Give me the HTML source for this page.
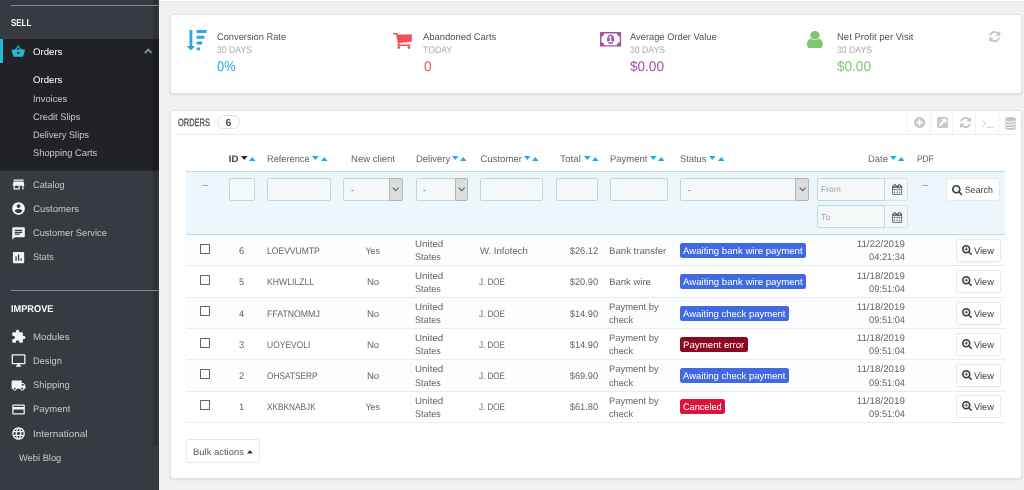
<!DOCTYPE html>
<html lang="en">
<head>
<meta charset="utf-8">
<title>Orders</title>
<style>
*{box-sizing:border-box;margin:0;padding:0}
html,body{width:1024px;height:490px;overflow:hidden;background:#eef0f1;font-family:"Liberation Sans",sans-serif;font-size:9.2px;color:#666}
#page{will-change:transform;position:relative;width:1024px;height:490px;overflow:hidden}
#nav{position:absolute;left:0;top:0;width:158.800px;height:490px;background:#383a42}
.panel{background:#fff;border:1px solid #dfe1e3;border-radius:3px;box-shadow:0 1px 2.500px rgba(0,0,0,.07)}
.t{position:absolute;white-space:nowrap;display:block;text-rendering:geometricPrecision}
svg{display:block;overflow:visible}
</style>
</head>
<body>
<div id="page">
<nav id="nav">
<div style="position:absolute;left:0.00px;top:38.80px;width:159.00px;height:131.20px;background:#202226"></div>
<div style="position:absolute;left:0.00px;top:170.00px;width:159.00px;height:1.00px;background:rgba(32,34,38,.55)"></div>
<div style="position:absolute;left:0.00px;top:38.80px;width:3.10px;height:24.30px;background:#25b9d7"></div>
<div style="position:absolute;left:153.00px;top:0.00px;width:5.30px;height:446.00px;background:rgba(0,0,0,.16);border-radius:0 0 3px 3px"></div>
<div style="position:absolute;left:11.30px;top:5.00px;width:147.70px;height:1.00px;background:#85888d"></div>
<div style="position:absolute;left:11.30px;top:289.90px;width:147.70px;height:1.00px;background:#85888d"></div>
<span class="t" style="top:18.00px;font-size:9.9px;line-height:12px;color:#fff;font-weight:700;left:11.30px;transform-origin:0 50%;transform:scaleX(0.8063);">SELL</span>
<span class="t" style="top:304.00px;font-size:9.9px;line-height:12px;color:#fff;font-weight:700;left:11.30px;transform-origin:0 50%;transform:scaleX(0.9308);">IMPROVE</span>
<svg style="position:absolute;left:10.60px;top:44.20px;" width="14.50" height="14.50" viewBox="0 0 24 24" fill="#25b9d7"><path d="M17.21 9l-4.38-6.56c-.19-.28-.51-.42-.83-.42-.32 0-.64.14-.83.43L6.79 9H2c-.55 0-1 .45-1 1 0 .09.01.18.04.27l2.54 9.27c.23.84 1 1.46 1.92 1.46h13c.92 0 1.69-.62 1.93-1.46l2.54-9.27L23 10c0-.55-.45-1-1-1h-4.79zM9 9l3-4.4L15 9H9zm3 8c-1.1 0-2-.9-2-2s.9-2 2-2 2 .9 2 2-.9 2-2 2z"/></svg>
<span class="t" style="top:47.00px;font-size:9.5px;line-height:12px;color:#fff;left:33.00px;transform-origin:0 50%;transform:scaleX(1.0129);">Orders</span>
<svg style="position:absolute;left:140.70px;top:44.00px;" width="14.40" height="14.40" viewBox="0 0 24 24" fill="#8b9aa0"><path d="M7.41 15.41L12 10.83l4.59 4.58L18 14l-6-6-6 6z" stroke="#8b9aa0" stroke-width="1.3"/></svg>
<span class="t" style="top:75.00px;font-size:9.5px;line-height:12px;color:#fff;left:33.20px;transform-origin:0 50%;transform:scaleX(1.0129);">Orders</span>
<span class="t" style="top:94.00px;font-size:9.5px;line-height:12px;color:#c7c8ca;left:33.20px;transform-origin:0 50%;transform:scaleX(0.9787);">Invoices</span>
<span class="t" style="top:112.00px;font-size:9.5px;line-height:12px;color:#c7c8ca;left:33.20px;transform-origin:0 50%;transform:scaleX(0.9742);">Credit Slips</span>
<span class="t" style="top:130.00px;font-size:9.5px;line-height:12px;color:#c7c8ca;left:33.20px;transform-origin:0 50%;transform:scaleX(0.9721);">Delivery Slips</span>
<span class="t" style="top:148.00px;font-size:9.5px;line-height:12px;color:#c7c8ca;left:33.20px;transform-origin:0 50%;transform:scaleX(0.9811);">Shopping Carts</span>
<svg style="position:absolute;left:10.60px;top:177.20px;" width="15.10" height="15.10" viewBox="0 0 24 24" fill="#f4f4f5"><path d="M20 4H4v2h16V4zm1 10v-2l-1-5H4l-1 5v2h1v6h10v-6h4v6h2v-6h1zm-9 4H6v-4h6v4z"/></svg>
<span class="t" style="top:180.00px;font-size:9.5px;line-height:12px;color:#c7c8ca;left:33.20px;transform-origin:0 50%;transform:scaleX(0.9687);">Catalog</span>
<svg style="position:absolute;left:10.60px;top:201.36px;" width="15.10" height="15.10" viewBox="0 0 24 24" fill="#f4f4f5"><path d="M12 2C6.48 2 2 6.48 2 12s4.48 10 10 10 10-4.48 10-10S17.52 2 12 2zm0 3c1.66 0 3 1.34 3 3s-1.34 3-3 3-3-1.34-3-3 1.34-3 3-3zm0 14.2c-2.5 0-4.71-1.28-6-3.22.03-1.99 4-3.08 6-3.08 1.99 0 5.97 1.09 6 3.08-1.29 1.94-3.5 3.22-6 3.22z"/></svg>
<span class="t" style="top:204.00px;font-size:9.5px;line-height:12px;color:#c7c8ca;left:33.20px;transform-origin:0 50%;">Customers</span>
<svg style="position:absolute;left:10.60px;top:225.52px;" width="15.10" height="15.10" viewBox="0 0 24 24" fill="#f4f4f5"><path d="M20 2H4c-1.1 0-1.99.9-1.99 2L2 22l4-4h14c1.1 0 2-.9 2-2V4c0-1.1-.9-2-2-2zM6 9h12v2H6V9zm8 5H6v-2h8v2zm4-6H6V6h12v2z"/></svg>
<span class="t" style="top:228.00px;font-size:9.5px;line-height:12px;color:#c7c8ca;left:33.20px;transform-origin:0 50%;transform:scaleX(0.9777);">Customer Service</span>
<svg style="position:absolute;left:10.60px;top:249.68px;" width="15.10" height="15.10" viewBox="0 0 24 24" fill="#f4f4f5"><path d="M19 3H5c-1.1 0-2 .9-2 2v14c0 1.1.9 2 2 2h14c1.1 0 2-.9 2-2V5c0-1.1-.9-2-2-2zM9 17H7v-7h2v7zm4 0h-2V7h2v10zm4 0h-2v-4h2v4z"/></svg>
<span class="t" style="top:252.00px;font-size:9.5px;line-height:12px;color:#c7c8ca;left:33.20px;transform-origin:0 50%;transform:scaleX(0.9576);">Stats</span>
<svg style="position:absolute;left:10.60px;top:329.30px;" width="15.10" height="15.10" viewBox="0 0 24 24" fill="#f4f4f5"><path d="M20.5 11H19V7c0-1.1-.9-2-2-2h-4V3.5C13 2.12 11.88 1 10.5 1S8 2.12 8 3.5V5H4c-1.1 0-1.99.9-1.99 2v3.8H3.5c1.49 0 2.7 1.21 2.7 2.7s-1.21 2.7-2.7 2.7H2V20c0 1.1.9 2 2 2h3.8v-1.5c0-1.49 1.21-2.7 2.7-2.7 1.49 0 2.7 1.21 2.7 2.7V22H17c1.1 0 2-.9 2-2v-4h1.5c1.38 0 2.5-1.12 2.5-2.5S21.88 11 20.5 11z"/></svg>
<span class="t" style="top:332.00px;font-size:9.5px;line-height:12px;color:#c7c8ca;left:33.20px;transform-origin:0 50%;transform:scaleX(1.0154);">Modules</span>
<svg style="position:absolute;left:10.60px;top:353.46px;" width="15.10" height="15.10" viewBox="0 0 24 24" fill="#f4f4f5"><path d="M21 2H3c-1.1 0-2 .9-2 2v12c0 1.1.9 2 2 2h7v2H8v2h8v-2h-2v-2h7c1.1 0 2-.9 2-2V4c0-1.1-.9-2-2-2zm0 14H3V4h18v12z"/></svg>
<span class="t" style="top:356.00px;font-size:9.5px;line-height:12px;color:#c7c8ca;left:33.20px;transform-origin:0 50%;transform:scaleX(0.9747);">Design</span>
<svg style="position:absolute;left:10.60px;top:377.62px;" width="15.10" height="15.10" viewBox="0 0 24 24" fill="#f4f4f5"><path d="M20 8h-3V4H3c-1.1 0-2 .9-2 2v11h2c0 1.66 1.34 3 3 3s3-1.34 3-3h6c0 1.66 1.34 3 3 3s3-1.34 3-3h2v-5l-3-4zM6 18.5c-.83 0-1.5-.67-1.5-1.5s.67-1.5 1.5-1.5 1.5.67 1.5 1.5-.67 1.5-1.5 1.5zm13.5-9l1.96 2.5H17V9.5h2.5zm-1.5 9c-.83 0-1.5-.67-1.5-1.5s.67-1.5 1.5-1.5 1.5.67 1.5 1.5-.67 1.5-1.5 1.5z"/></svg>
<span class="t" style="top:380.00px;font-size:9.5px;line-height:12px;color:#c7c8ca;left:33.20px;transform-origin:0 50%;transform:scaleX(0.9937);">Shipping</span>
<svg style="position:absolute;left:10.60px;top:401.78px;" width="15.10" height="15.10" viewBox="0 0 24 24" fill="#f4f4f5"><path d="M20 4H4c-1.11 0-1.99.89-1.99 2L2 18c0 1.11.89 2 2 2h16c1.11 0 2-.89 2-2V6c0-1.11-.89-2-2-2zm0 14H4v-6h16v6zm0-10H4V6h16v2z"/></svg>
<span class="t" style="top:404.00px;font-size:9.5px;line-height:12px;color:#c7c8ca;left:33.20px;transform-origin:0 50%;transform:scaleX(0.9957);">Payment</span>
<svg style="position:absolute;left:10.60px;top:425.94px;" width="15.10" height="15.10" viewBox="0 0 24 24" fill="#f4f4f5"><path d="M11.99 2C6.47 2 2 6.48 2 12s4.47 10 9.99 10C17.52 22 22 17.52 22 12S17.52 2 11.99 2zm6.93 6h-2.95c-.32-1.25-.78-2.45-1.38-3.56 1.84.63 3.37 1.91 4.33 3.56zM12 4.04c.83 1.2 1.48 2.53 1.91 3.96h-3.82c.43-1.43 1.08-2.76 1.91-3.96zM4.26 14C4.1 13.36 4 12.69 4 12s.1-1.36.26-2h3.38c-.08.66-.14 1.32-.14 2 0 .68.06 1.34.14 2H4.26zm.82 2h2.95c.32 1.25.78 2.45 1.38 3.56-1.84-.63-3.37-1.9-4.33-3.56zm2.95-8H5.08c.96-1.66 2.49-2.93 4.33-3.56C8.81 5.55 8.35 6.75 8.03 8zM12 19.96c-.83-1.2-1.48-2.53-1.91-3.96h3.82c-.43 1.43-1.08 2.76-1.91 3.96zM14.34 14H9.66c-.09-.66-.16-1.32-.16-2 0-.68.07-1.35.16-2h4.68c.09.65.16 1.32.16 2 0 .68-.07 1.34-.16 2zm.25 5.56c.6-1.11 1.06-2.31 1.38-3.56h2.95c-.96 1.65-2.49 2.93-4.33 3.56zM16.36 14c.08-.66.14-1.32.14-2 0-.68-.06-1.34-.14-2h3.38c.16.64.26 1.31.26 2s-.1 1.36-.26 2h-3.38z"/></svg>
<span class="t" style="top:429.00px;font-size:9.5px;line-height:12px;color:#c7c8ca;left:33.20px;transform-origin:0 50%;transform:scaleX(1.0427);">International</span>
<span class="t" style="top:453.00px;font-size:9.5px;line-height:12px;color:#c7c8ca;left:19.10px;transform-origin:0 50%;transform:scaleX(0.9800);">Webi Blog</span>
</nav>
<main>
<div style="position:absolute;left:159.00px;top:0.00px;width:865.00px;height:1.00px;background:#fdfdfd"></div>
<div style="position:absolute;left:159.00px;top:1.00px;width:865.00px;height:1.00px;background:#e9ebec"></div>
<div class="panel" style="position:absolute;left:170.00px;top:14.00px;width:852.00px;height:80.00px;"></div>
<svg style="position:absolute;left:186.50px;top:29.80px" width="19.50" height="20.30" viewBox="31.2 0 1760.8 1792" preserveAspectRatio="none" fill="#2ba8e3"><path d="M1216 1568v192q0 14-9 23t-23 9h-256q-14 0-23-9t-9-23v-192q0-14 9-23t23-9h256q14 0 23 9t9 23zm-480-128q0 12-10 24l-319 319q-10 9-23 9-12 0-23-9l-320-320q-15-16-7-35 8-20 30-20h192v-1376q0-14 9-23t23-9h192q14 0 23 9t9 23v1376h192q14 0 23 9t9 23zm672-384v192q0 14-9 23t-23 9h-448q-14 0-23-9t-9-23v-192q0-14 9-23t23-9h448q14 0 23 9t9 23zm192-512v192q0 14-9 23t-23 9h-640q-14 0-23-9t-9-23v-192q0-14 9-23t23-9h640q14 0 23 9t9 23zm192-512v192q0 14-9 23t-23 9h-832q-14 0-23-9t-9-23v-192q0-14 9-23t23-9h832q14 0 23 9t9 23z"/></svg>
<svg style="position:absolute;left:392.50px;top:32.90px" width="18.85" height="15.95" viewBox="64 256 1664 1408" preserveAspectRatio="xMidYMid meet" fill="#f64e55"><path d="M704 1536q0 52-38 90t-90 38-90-38-38-90 38-90 90-38 90 38 38 90zm896 0q0 52-38 90t-90 38-90-38-38-90 38-90 90-38 90 38 38 90zm128-1088v512q0 24-16.500 42.500t-40.500 21.500l-1044 122q13 60 13 70 0 16-24 64h920q26 0 45 19t19 45-19 45-45 19h-1024q-26 0-45-19t-19-45q0-11 8-31.500t16-36 21.500-40 15.500-29.500l-177-823h-204q-26 0-45-19t-19-45 19-45 45-19h256q16 0 28.500 6.500t19.500 15.500 13 24.500 8 26 5.500 29.500 4.500 26h1201q26 0 45 19t19 45z"/></svg>
<svg style="position:absolute;left:599.90px;top:32.40px" width="21.20" height="14.60" viewBox="0 256 1920 1280" preserveAspectRatio="none" fill="#a250a8"><path d="M768 1152h384v-96h-128v-448h-114l-148 137 77 80q42-37 55-57h2v288h-128v96zm512-256q0 70-21 142t-59.500 134-101.500 101-138 39-138-39-101.500-101-59.500-134-21-142 21-142 59.500-134 101.500-101 138-39 138 39 101.500 101 59.500 134 21 142zm512 256v-512q-106 0-181-75t-75-181h-1152q0 106-75 181t-181 75v512q106 0 181 75t75 181h1152q0-106 75-181t181-75zm128-832v1152q0 26-19 45t-45 19h-1792q-26 0-45-19t-19-45v-1152q0-26 19-45t45-19h1792q26 0 45 19t19 45z"/></svg>
<svg style="position:absolute;left:806.80px;top:31.30px" width="15.80" height="17.00" viewBox="256 128 1280 1536" preserveAspectRatio="none" fill="#7cc66e"><path d="M1536 1399q0 109-62.500 187t-150.500 78h-854q-88 0-150.500-78t-62.500-187q0-85 8.500-160.500t31.500-152 58.500-131 94-89 134.500-34.500q131 128 313 128t313-128q76 0 134.500 34.500t94 89 58.500 131 31.500 152 8.500 160.500zm-256-887q0 159-112.500 271.500t-271.500 112.500-271.500-112.500-112.500-271.500 112.500-271.500 271.500-112.500 271.500 112.500 112.500 271.500z"/></svg>
<span class="t" style="top:32.00px;font-size:9.7px;line-height:12px;color:#555;left:216.50px;transform-origin:0 50%;transform:scaleX(0.9578);">Conversion Rate</span>
<span class="t" style="top:45.00px;font-size:9.6px;line-height:12px;color:#aaa;left:216.50px;transform-origin:0 50%;transform:scaleX(0.9026);">30 DAYS</span>
<span class="t" style="top:58.00px;font-size:14.0px;line-height:16px;color:#2ba8e3;left:217.10px;transform-origin:0 50%;transform:scaleX(0.9169);">0%</span>
<span class="t" style="top:32.00px;font-size:9.7px;line-height:12px;color:#555;left:423.20px;transform-origin:0 50%;transform:scaleX(0.9722);">Abandoned Carts</span>
<span class="t" style="top:45.00px;font-size:9.6px;line-height:12px;color:#aaa;left:423.20px;transform-origin:0 50%;transform:scaleX(0.9072);">TODAY</span>
<span class="t" style="top:58.00px;font-size:14.0px;line-height:16px;color:#f64e55;left:423.80px;transform-origin:0 50%;transform:scaleX(0.9767);">0</span>
<span class="t" style="top:32.00px;font-size:9.7px;line-height:12px;color:#555;left:630.20px;transform-origin:0 50%;transform:scaleX(0.9620);">Average Order Value</span>
<span class="t" style="top:45.00px;font-size:9.6px;line-height:12px;color:#aaa;left:630.20px;transform-origin:0 50%;transform:scaleX(0.9026);">30 DAYS</span>
<span class="t" style="top:58.00px;font-size:14.0px;line-height:16px;color:#a250a8;left:629.90px;transform-origin:0 50%;transform:scaleX(0.9693);">$0.00</span>
<span class="t" style="top:32.00px;font-size:9.7px;line-height:12px;color:#555;left:837.20px;transform-origin:0 50%;transform:scaleX(0.9822);">Net Profit per Visit</span>
<span class="t" style="top:45.00px;font-size:9.6px;line-height:12px;color:#aaa;left:837.20px;transform-origin:0 50%;transform:scaleX(0.9026);">30 DAYS</span>
<span class="t" style="top:58.00px;font-size:14.0px;line-height:16px;color:#7cc66e;left:836.90px;transform-origin:0 50%;transform:scaleX(0.9693);">$0.00</span>
<svg style="position:absolute;left:988.90px;top:31.00px" width="11.40" height="11.20" viewBox="128 128 1536 1536" preserveAspectRatio="xMidYMid meet" fill="#c6c6c6"><path d="M1639 1056q0 5-1 7-64 268-268 434.500t-478 166.500q-146 0-282.500-55t-243.500-157l-129 129q-19 19-45 19t-45-19-19-45v-448q0-26 19-45t45-19h448q26 0 45 19t19 45-19 45l-137 137q71 66 161 102t187 36q134 0 250-65t186-179q11-17 53-117 8-23 30-23h192q13 0 22.500 9.500t9.500 22.500zm25-800v448q0 26-19 45t-45 19h-448q-26 0-45-19t-19-45 19-45l138-138q-148-137-349-137-134 0-250 65t-186 179q-11 17-53 117-8 23-30 23h-199q-13 0-22.500-9.500t-9.500-22.500v-7q65-268 270-434.500t480-166.500q146 0 284 55.500t245 156.500l130-129q19-19 45-19t45 19 19 45z"/></svg>
<div class="panel" style="position:absolute;left:170.00px;top:110.00px;width:852.00px;height:369.00px;"></div>
<span class="t" style="top:117.00px;font-size:10.6px;line-height:12px;color:#555;left:178.20px;transform-origin:0 50%;transform:scaleX(0.7056);-webkit-text-stroke:.35px #555;">ORDERS</span>
<div style="position:absolute;left:217.00px;top:114.60px;width:22.60px;height:14.40px;background:#fff;border:1px solid #e1e1e1;border-radius:8px"></div>
<span class="t" style="top:118.00px;font-size:10.4px;line-height:12px;color:#555;font-weight:700;left:225.61px;transform-origin:50% 50%;">6</span>
<div style="position:absolute;left:176.30px;top:133.80px;width:840.00px;height:1.00px;background:#e9eaeb"></div>
<div style="position:absolute;left:906.90px;top:111.00px;width:1.00px;height:22.80px;background:#f0f2f3"></div>
<div style="position:absolute;left:929.60px;top:111.00px;width:1.00px;height:22.80px;background:#f0f2f3"></div>
<div style="position:absolute;left:952.40px;top:111.00px;width:1.00px;height:22.80px;background:#f0f2f3"></div>
<div style="position:absolute;left:975.00px;top:111.00px;width:1.00px;height:22.80px;background:#f0f2f3"></div>
<div style="position:absolute;left:997.80px;top:111.00px;width:1.00px;height:22.80px;background:#f0f2f3"></div>
<svg style="position:absolute;left:914.00px;top:117.30px" width="11.10" height="11.10" viewBox="128 128 1536 1536" preserveAspectRatio="xMidYMid meet" fill="#c4c6c8"><path d="M1344 960v-128q0-26-19-45t-45-19h-256v-256q0-26-19-45t-45-19h-128q-26 0-45 19t-19 45v256h-256q-26 0-45 19t-19 45v128q0 26 19 45t45 19h256v256q0 26 19 45t45 19h128q26 0 45-19t19-45v-256h256q26 0 45-19t19-45zm320-64q0 209-103 385.500t-279.500 279.500-385.500 103-385.500-103-279.500-279.500-103-385.500 103-385.500 279.500-279.500 385.500-103 385.500 103 279.500 279.500 103 385.500z"/></svg>
<svg style="position:absolute;left:936.50px;top:117.30px" width="11.10" height="11.10" viewBox="128 128 1536 1536" preserveAspectRatio="xMidYMid meet" fill="#c8cacc"><path d="M1408 928v-480q0-26-19-45t-45-19h-480q-42 0-59 39-17 41 14 70l144 144-534 534q-19 19-19 45t19 45l102 102q19 19 45 19t45-19l534-534 144 144q18 19 45 19 12 0 25-5 39-17 39-59zm256-512v960q0 119-84.500 203.500t-203.500 84.500h-960q-119 0-203.500-84.500t-84.500-203.500v-960q0-119 84.500-203.500t203.500-84.500h960q119 0 203.500 84.500t84.500 203.500z"/></svg>
<svg style="position:absolute;left:959.50px;top:117.30px" width="11.10" height="11.10" viewBox="128 128 1536 1536" preserveAspectRatio="xMidYMid meet" fill="#c4c6c8"><path d="M1639 1056q0 5-1 7-64 268-268 434.500t-478 166.500q-146 0-282.500-55t-243.500-157l-129 129q-19 19-45 19t-45-19-19-45v-448q0-26 19-45t45-19h448q26 0 45 19t19 45-19 45l-137 137q71 66 161 102t187 36q134 0 250-65t186-179q11-17 53-117 8-23 30-23h192q13 0 22.500 9.500t9.500 22.500zm25-800v448q0 26-19 45t-45 19h-448q-26 0-45-19t-19-45 19-45l138-138q-148-137-349-137-134 0-250 65t-186 179q-11 17-53 117-8 23-30 23h-199q-13 0-22.500-9.500t-9.500-22.500v-7q65-268 270-434.500t480-166.500q146 0 284 55.500t245 156.500l130-129q19-19 45-19t45 19 19 45z"/></svg>
<svg style="position:absolute;left:981.80px;top:119.70px" width="11.90" height="7.70" viewBox="77 461 1651 1075" preserveAspectRatio="xMidYMid meet" fill="#cfd1d3"><path d="M649 983l-466 466q-10 10-23 10t-23-10l-50-50q-10-10-10-23t10-23l393-393-393-393q-10-10-10-23t10-23l50-50q10-10 23-10t23 10l466 466q10 10 10 23t-10 23zm1079 457v64q0 14-9 23t-23 9h-960q-14 0-23-9t-9-23v-64q0-14 9-23t23-9h960q14 0 23 9t9 23z"/></svg>
<svg style="position:absolute;left:1004.60px;top:116.60px" width="11.10" height="12.90" viewBox="128 0 1536 1792" preserveAspectRatio="xMidYMid meet" fill="#c4c6c8"><path d="M896 768q237 0 443-43t325-127v170q0 69-103 128t-280 93.500-385 34.500-385-34.500-280-93.500-103-128v-170q119 84 325 127t443 43zm0 768q237 0 443-43t325-127v170q0 69-103 128t-280 93.500-385 34.500-385-34.500-280-93.500-103-128v-170q119 84 325 127t443 43zm0-384q237 0 443-43t325-127v170q0 69-103 128t-280 93.500-385 34.500-385-34.500-280-93.500-103-128v-170q119 84 325 127t443 43zm0-1152q208 0 385 34.500t280 93.500 103 128v128q0 69-103 128t-280 93.500-385 34.500-385-34.500-280-93.500-103-128v-128q0-69 103-128t280-93.500 385-34.500z"/></svg>
<span class="t" style="top:154.00px;font-size:9.6px;line-height:12px;color:#444;font-weight:700;left:228.80px;transform-origin:0 50%;">ID</span>
<svg style="position:absolute;left:240.60px;top:156.20px;" width="6.60" height="4.00" viewBox="0 0 6.200 3.600" preserveAspectRatio="none" fill="#222"><path d="M0 0h6.200L3.100 3.600z"/></svg>
<svg style="position:absolute;left:248.80px;top:156.60px;" width="6.60" height="4.00" viewBox="0 0 6.200 3.600" preserveAspectRatio="none" fill="#1dacef"><path d="M0 3.600h6.200L3.100 0z"/></svg>
<span class="t" style="top:154.00px;font-size:9.6px;line-height:12px;color:#656565;left:267.30px;transform-origin:0 50%;transform:scaleX(0.9612);">Reference</span>
<svg style="position:absolute;left:312.40px;top:156.20px;" width="6.60" height="4.00" viewBox="0 0 6.200 3.600" preserveAspectRatio="none" fill="#1dacef"><path d="M0 0h6.200L3.100 3.600z"/></svg>
<svg style="position:absolute;left:320.60px;top:156.60px;" width="6.60" height="4.00" viewBox="0 0 6.200 3.600" preserveAspectRatio="none" fill="#1dacef"><path d="M0 3.600h6.200L3.100 0z"/></svg>
<span class="t" style="top:154.00px;font-size:9.6px;line-height:12px;color:#656565;left:351.00px;transform-origin:0 50%;transform:scaleX(0.9948);">New client</span>
<span class="t" style="top:154.00px;font-size:9.6px;line-height:12px;color:#656565;left:415.70px;transform-origin:0 50%;transform:scaleX(0.9851);">Delivery</span>
<svg style="position:absolute;left:452.20px;top:156.20px;" width="6.60" height="4.00" viewBox="0 0 6.200 3.600" preserveAspectRatio="none" fill="#1dacef"><path d="M0 0h6.200L3.100 3.600z"/></svg>
<svg style="position:absolute;left:460.40px;top:156.60px;" width="6.60" height="4.00" viewBox="0 0 6.200 3.600" preserveAspectRatio="none" fill="#1dacef"><path d="M0 3.600h6.200L3.100 0z"/></svg>
<span class="t" style="top:154.00px;font-size:9.6px;line-height:12px;color:#656565;left:480.40px;transform-origin:0 50%;">Customer</span>
<svg style="position:absolute;left:524.20px;top:156.20px;" width="6.60" height="4.00" viewBox="0 0 6.200 3.600" preserveAspectRatio="none" fill="#1dacef"><path d="M0 0h6.200L3.100 3.600z"/></svg>
<svg style="position:absolute;left:532.40px;top:156.60px;" width="6.60" height="4.00" viewBox="0 0 6.200 3.600" preserveAspectRatio="none" fill="#1dacef"><path d="M0 3.600h6.200L3.100 0z"/></svg>
<span class="t" style="top:154.00px;font-size:9.6px;line-height:12px;color:#656565;left:560.00px;transform-origin:0 50%;transform:scaleX(1.0362);">Total</span>
<svg style="position:absolute;left:583.50px;top:156.20px;" width="6.60" height="4.00" viewBox="0 0 6.200 3.600" preserveAspectRatio="none" fill="#1dacef"><path d="M0 0h6.200L3.100 3.600z"/></svg>
<svg style="position:absolute;left:591.70px;top:156.60px;" width="6.60" height="4.00" viewBox="0 0 6.200 3.600" preserveAspectRatio="none" fill="#1dacef"><path d="M0 3.600h6.200L3.100 0z"/></svg>
<span class="t" style="top:154.00px;font-size:9.6px;line-height:12px;color:#656565;left:610.20px;transform-origin:0 50%;transform:scaleX(0.9853);">Payment</span>
<svg style="position:absolute;left:649.50px;top:156.20px;" width="6.60" height="4.00" viewBox="0 0 6.200 3.600" preserveAspectRatio="none" fill="#1dacef"><path d="M0 0h6.200L3.100 3.600z"/></svg>
<svg style="position:absolute;left:657.70px;top:156.60px;" width="6.60" height="4.00" viewBox="0 0 6.200 3.600" preserveAspectRatio="none" fill="#1dacef"><path d="M0 3.600h6.200L3.100 0z"/></svg>
<span class="t" style="top:154.00px;font-size:9.6px;line-height:12px;color:#656565;left:680.40px;transform-origin:0 50%;transform:scaleX(0.9660);">Status</span>
<svg style="position:absolute;left:709.30px;top:156.20px;" width="6.60" height="4.00" viewBox="0 0 6.200 3.600" preserveAspectRatio="none" fill="#1dacef"><path d="M0 0h6.200L3.100 3.600z"/></svg>
<svg style="position:absolute;left:717.50px;top:156.60px;" width="6.60" height="4.00" viewBox="0 0 6.200 3.600" preserveAspectRatio="none" fill="#1dacef"><path d="M0 3.600h6.200L3.100 0z"/></svg>
<span class="t" style="top:154.00px;font-size:9.6px;line-height:12px;color:#656565;left:867.70px;transform-origin:0 50%;transform:scaleX(0.9826);">Date</span>
<svg style="position:absolute;left:889.90px;top:156.20px;" width="6.60" height="4.00" viewBox="0 0 6.200 3.600" preserveAspectRatio="none" fill="#1dacef"><path d="M0 0h6.200L3.100 3.600z"/></svg>
<svg style="position:absolute;left:898.10px;top:156.60px;" width="6.60" height="4.00" viewBox="0 0 6.200 3.600" preserveAspectRatio="none" fill="#1dacef"><path d="M0 3.600h6.200L3.100 0z"/></svg>
<span class="t" style="top:154.00px;font-size:9.6px;line-height:12px;color:#656565;left:916.60px;transform-origin:0 50%;transform:scaleX(0.8716);">PDF</span>
<div style="position:absolute;left:186.20px;top:170.60px;width:819.20px;height:64.20px;background:#ecf6fb;border-top:1px solid #b4dcec;border-bottom:1px solid #b4dcec"></div>
<span class="t" style="top:179.00px;font-size:9.2px;line-height:12px;color:#666;left:201.50px;transform-origin:0 50%;transform:scaleX(0.9515);">--</span>
<span class="t" style="top:179.00px;font-size:9.2px;line-height:12px;color:#666;left:921.80px;transform-origin:0 50%;transform:scaleX(0.9515);">--</span>
<div style="position:absolute;left:228.60px;top:177.80px;width:26.40px;height:23.00px;background:#f5f8f9;border:1px solid #bad9e8;border-radius:2px"></div>
<div style="position:absolute;left:267.20px;top:177.80px;width:63.40px;height:23.00px;background:#f5f8f9;border:1px solid #bad9e8;border-radius:2px"></div>
<div style="position:absolute;left:343.30px;top:177.80px;width:59.30px;height:23.00px;background:#f5f8f9;border:1px solid #bad9e8;border-radius:2px"></div>
<div style="position:absolute;left:389.20px;top:177.80px;width:13.40px;height:23.00px;background:#dddddd;border:1px solid #b4b4b4;border-radius:0 2px 2px 0"></div>
<svg style="position:absolute;left:392.40px;top:187.00px;" width="7.40" height="4.60" viewBox="0 0 7.400 4.600" fill="none"><path d="M.7.700l3 3 3-3" fill="none" stroke="#606060" stroke-width="1.150"/></svg>
<span class="t" style="top:184.00px;font-size:9.2px;line-height:12px;color:#666;left:350.50px;transform-origin:0 50%;transform:scaleX(0.9515);">-</span>
<div style="position:absolute;left:415.70px;top:177.80px;width:52.30px;height:23.00px;background:#f5f8f9;border:1px solid #bad9e8;border-radius:2px"></div>
<div style="position:absolute;left:454.60px;top:177.80px;width:13.40px;height:23.00px;background:#dddddd;border:1px solid #b4b4b4;border-radius:0 2px 2px 0"></div>
<svg style="position:absolute;left:457.80px;top:187.00px;" width="7.40" height="4.60" viewBox="0 0 7.400 4.600" fill="none"><path d="M.7.700l3 3 3-3" fill="none" stroke="#606060" stroke-width="1.150"/></svg>
<span class="t" style="top:184.00px;font-size:9.2px;line-height:12px;color:#666;left:422.90px;transform-origin:0 50%;transform:scaleX(0.9515);">-</span>
<div style="position:absolute;left:480.40px;top:177.80px;width:62.40px;height:23.00px;background:#f5f8f9;border:1px solid #bad9e8;border-radius:2px"></div>
<div style="position:absolute;left:555.50px;top:177.80px;width:42.10px;height:23.00px;background:#f5f8f9;border:1px solid #bad9e8;border-radius:2px"></div>
<div style="position:absolute;left:610.20px;top:177.80px;width:58.20px;height:23.00px;background:#f5f8f9;border:1px solid #bad9e8;border-radius:2px"></div>
<div style="position:absolute;left:680.40px;top:177.80px;width:128.40px;height:23.00px;background:#f5f8f9;border:1px solid #bad9e8;border-radius:2px"></div>
<div style="position:absolute;left:795.40px;top:177.80px;width:13.40px;height:23.00px;background:#dddddd;border:1px solid #b4b4b4;border-radius:0 2px 2px 0"></div>
<svg style="position:absolute;left:798.60px;top:187.00px;" width="7.40" height="4.60" viewBox="0 0 7.400 4.600" fill="none"><path d="M.7.700l3 3 3-3" fill="none" stroke="#606060" stroke-width="1.150"/></svg>
<span class="t" style="top:184.00px;font-size:9.2px;line-height:12px;color:#666;left:687.60px;transform-origin:0 50%;transform:scaleX(0.9515);">-</span>
<div style="position:absolute;left:817.40px;top:177.90px;width:90.20px;height:22.80px;background:#f4f8fa;border:1px solid #d3e3eb;border-radius:2px"></div>
<div style="position:absolute;left:817.40px;top:177.90px;width:67.60px;height:22.80px;background:#f5f8f9;border:1px solid #bad9e8;border-radius:2px 0 0 2px"></div>
<span class="t" style="top:183.00px;font-size:8.4px;line-height:12px;color:#a3a3a3;left:821.10px;transform-origin:0 50%;transform:scaleX(1.0098);">From</span>
<svg style="position:absolute;left:891.50px;top:184.40px" width="10.20" height="10.80" viewBox="64 0 1664 1792" preserveAspectRatio="xMidYMid meet" fill="#555"><path d="M192 1664h288v-288h-288v288zm352 0h320v-288h-320v288zm-352-352h288v-320h-288v320zm352 0h320v-320h-320v320zm-352-384h288v-288h-288v288zm736 736h320v-288h-320v288zm-384-736h320v-288h-320v288zm768 736h288v-288h-288v288zm-384-352h320v-320h-320v320zm-352-864v-288q0-13-9.500-22.500t-22.500-9.500h-64q-13 0-22.500 9.500t-9.500 22.500v288q0 13 9.500 22.500t22.500 9.500h64q13 0 22.500-9.500t9.500-22.500zm736 864h288v-320h-288v320zm-384-384h320v-288h-320v288zm384 0h288v-288h-288v288zm32-480v-288q0-13-9.500-22.500t-22.500-9.500h-64q-13 0-22.500 9.500t-9.500 22.500v288q0 13 9.500 22.500t22.500 9.500h64q13 0 22.500-9.500t9.500-22.500zm384-64v1280q0 52-38 90t-90 38h-1408q-52 0-90-38t-38-90v-1280q0-52 38-90t90-38h128v-96q0-66 47-113t113-47h64q66 0 113 47t47 113v96h384v-96q0-66 47-113t113-47h64q66 0 113 47t47 113v96h128q52 0 90 38t38 90z"/></svg>
<div style="position:absolute;left:817.40px;top:205.40px;width:90.20px;height:22.80px;background:#f4f8fa;border:1px solid #d3e3eb;border-radius:2px"></div>
<div style="position:absolute;left:817.40px;top:205.40px;width:67.60px;height:22.80px;background:#f5f8f9;border:1px solid #bad9e8;border-radius:2px 0 0 2px"></div>
<span class="t" style="top:211.00px;font-size:8.4px;line-height:12px;color:#a3a3a3;left:821.10px;transform-origin:0 50%;transform:scaleX(1.0500);">To</span>
<svg style="position:absolute;left:891.50px;top:211.90px" width="10.20" height="10.80" viewBox="64 0 1664 1792" preserveAspectRatio="xMidYMid meet" fill="#555"><path d="M192 1664h288v-288h-288v288zm352 0h320v-288h-320v288zm-352-352h288v-320h-288v320zm352 0h320v-320h-320v320zm-352-384h288v-288h-288v288zm736 736h320v-288h-320v288zm-384-736h320v-288h-320v288zm768 736h288v-288h-288v288zm-384-352h320v-320h-320v320zm-352-864v-288q0-13-9.500-22.500t-22.500-9.500h-64q-13 0-22.500 9.500t-9.500 22.500v288q0 13 9.500 22.500t22.500 9.500h64q13 0 22.500-9.500t9.500-22.500zm736 864h288v-320h-288v320zm-384-384h320v-288h-320v288zm384 0h288v-288h-288v288zm32-480v-288q0-13-9.500-22.500t-22.500-9.500h-64q-13 0-22.500 9.500t-9.500 22.500v288q0 13 9.500 22.500t22.500 9.500h64q13 0 22.500-9.500t9.500-22.500zm384-64v1280q0 52-38 90t-90 38h-1408q-52 0-90-38t-38-90v-1280q0-52 38-90t90-38h128v-96q0-66 47-113t113-47h64q66 0 113 47t47 113v96h384v-96q0-66 47-113t113-47h64q66 0 113 47t47 113v96h128q52 0 90 38t38 90z"/></svg>
<div style="position:absolute;left:945.60px;top:177.90px;width:54.20px;height:22.80px;background:#fff;border:1px solid #e6e9ea;border-radius:2.500px"></div>
<svg style="position:absolute;left:952.10px;top:184.50px" width="10.20" height="10.20" viewBox="64 128 1664 1664" preserveAspectRatio="xMidYMid meet" fill="#3c3c3c"><path d="M1216 832q0-185-131.500-316.500t-316.500-131.500-316.500 131.500-131.500 316.500 131.500 316.500 316.500 131.500 316.500-131.500 131.500-316.500zm512 832q0 52-38 90t-90 38q-54 0-90-38l-343-342q-179 124-399 124-143 0-273.500-55.500t-225-150-150-225-55.500-273.500 55.500-273.500 150-225 225-150 273.500-55.500 273.500 55.500 225 150 150 225 55.500 273.500q0 220-124 399l343 343q37 37 37 90z"/></svg>
<span class="t" style="top:184.00px;font-size:9.2px;line-height:12px;color:#3c3c3c;left:964.80px;transform-origin:0 50%;transform:scaleX(0.9537);">Search</span>
<div style="position:absolute;left:186.20px;top:235.00px;width:819.20px;height:31.00px;background:#fcfdfe;border-bottom:1px solid #eaedef"></div>
<div style="position:absolute;left:199.80px;top:244.00px;width:10.00px;height:10.00px;background:#fff;border:1px solid #666;border-radius:.5px"></div>
<span class="t" style="top:246.00px;font-size:9.5px;line-height:12px;color:#666;left:239.36px;transform-origin:50% 50%;transform:scaleX(0.9804);">6</span>
<span class="t" style="top:246.00px;font-size:9.5px;line-height:12px;color:#666;left:267.20px;transform-origin:0 50%;transform:scaleX(0.9015);">LOEVVUMTP</span>
<span class="t" style="top:246.00px;font-size:9.5px;line-height:12px;color:#666;left:365.15px;transform-origin:50% 50%;transform:scaleX(0.9342);">Yes</span>
<span class="t" style="top:239.00px;font-size:9.5px;line-height:12px;color:#666;left:414.80px;transform-origin:0 50%;transform:scaleX(1.0299);">United</span>
<span class="t" style="top:252.00px;font-size:9.5px;line-height:12px;color:#666;left:414.80px;transform-origin:0 50%;transform:scaleX(0.9584);">States</span>
<span class="t" style="top:246.00px;font-size:9.5px;line-height:12px;color:#666;left:479.70px;transform-origin:0 50%;transform:scaleX(1.0087);">W. Infotech</span>
<span class="t" style="top:246.00px;font-size:9.5px;line-height:12px;color:#666;right:426.00px;transform-origin:100% 50%;transform:scaleX(0.9744);">$26.12</span>
<span class="t" style="top:246.00px;font-size:9.5px;line-height:12px;color:#666;left:609.20px;transform-origin:0 50%;transform:scaleX(1.0132);">Bank transfer</span>
<div style="position:absolute;left:679.80px;top:243.00px;width:126.54px;height:15.40px;background:#4169e1;border-radius:2.500px"></div>
<span class="t" style="top:246.00px;font-size:9.5px;line-height:12px;color:#fff;left:683.10px;transform-origin:0 50%;transform:scaleX(1.0129);">Awaiting bank wire payment</span>
<span class="t" style="top:239.00px;font-size:9.5px;line-height:12px;color:#666;right:119.00px;transform-origin:100% 50%;transform:scaleX(1.0268);">11/22/2019</span>
<span class="t" style="top:252.00px;font-size:9.5px;line-height:12px;color:#666;right:119.00px;transform-origin:100% 50%;transform:scaleX(0.9709);">04:21:34</span>
<div style="position:absolute;left:955.60px;top:239.00px;width:45.00px;height:23.00px;background:#fff;border:1px solid #e6e9ea;border-radius:2.500px"></div>
<svg style="position:absolute;left:961.80px;top:245.40px" width="10.00" height="10.00" viewBox="64 128 1664 1664" preserveAspectRatio="xMidYMid meet" fill="#3c3c3c"><path d="M1088 800v64q0 13-9.500 22.500t-22.500 9.500h-224v224q0 13-9.500 22.500t-22.500 9.500h-64q-13 0-22.500-9.500t-9.500-22.500v-224h-224q-13 0-22.500-9.500t-9.500-22.500v-64q0-13 9.500-22.500t22.500-9.500h224v-224q0-13 9.500-22.500t22.500-9.500h64q13 0 22.500 9.500t9.500 22.500v224h224q13 0 22.500 9.500t9.500 22.500zm128 32q0-185-131.500-316.500t-316.500-131.500-316.500 131.500-131.500 316.500 131.500 316.500 316.500 131.500 316.500-131.500 131.500-316.500zm512 832q0 53-37.500 90.500t-90.500 37.500q-54 0-90-38l-343-342q-179 124-399 124-143 0-273.500-55.500t-225-150-150-225-55.500-273.500 55.500-273.500 150-225 225-150 273.500-55.500 273.500 55.500 225 150 150 225 55.500 273.500q0 220-124 399l343 343q37 37 37 90z"/></svg>
<span class="t" style="top:246.00px;font-size:9.5px;line-height:12px;color:#3c3c3c;left:974.00px;transform-origin:0 50%;transform:scaleX(0.9696);">View</span>
<div style="position:absolute;left:186.20px;top:266.00px;width:819.20px;height:32.00px;background:#fff;border-bottom:1px solid #eaedef"></div>
<div style="position:absolute;left:199.80px;top:275.00px;width:10.00px;height:10.00px;background:#fff;border:1px solid #666;border-radius:.5px"></div>
<span class="t" style="top:277.00px;font-size:9.5px;line-height:12px;color:#666;left:239.36px;transform-origin:50% 50%;transform:scaleX(0.9804);">5</span>
<span class="t" style="top:277.00px;font-size:9.5px;line-height:12px;color:#666;left:267.20px;transform-origin:0 50%;transform:scaleX(0.9111);">KHWLILZLL</span>
<span class="t" style="top:277.00px;font-size:9.5px;line-height:12px;color:#666;left:366.83px;transform-origin:50% 50%;transform:scaleX(1.0130);">No</span>
<span class="t" style="top:271.00px;font-size:9.5px;line-height:12px;color:#666;left:414.80px;transform-origin:0 50%;transform:scaleX(1.0299);">United</span>
<span class="t" style="top:284.00px;font-size:9.5px;line-height:12px;color:#666;left:414.80px;transform-origin:0 50%;transform:scaleX(0.9584);">States</span>
<span class="t" style="top:277.00px;font-size:9.5px;line-height:12px;color:#666;left:479.20px;transform-origin:0 50%;transform:scaleX(0.8455);">J. DOE</span>
<span class="t" style="top:277.00px;font-size:9.5px;line-height:12px;color:#666;right:426.00px;transform-origin:100% 50%;transform:scaleX(0.9744);">$20.90</span>
<span class="t" style="top:277.00px;font-size:9.5px;line-height:12px;color:#666;left:609.20px;transform-origin:0 50%;">Bank wire</span>
<div style="position:absolute;left:679.80px;top:274.00px;width:126.54px;height:15.40px;background:#4169e1;border-radius:2.500px"></div>
<span class="t" style="top:277.00px;font-size:9.5px;line-height:12px;color:#fff;left:683.10px;transform-origin:0 50%;transform:scaleX(1.0129);">Awaiting bank wire payment</span>
<span class="t" style="top:271.00px;font-size:9.5px;line-height:12px;color:#666;right:119.00px;transform-origin:100% 50%;transform:scaleX(1.0268);">11/18/2019</span>
<span class="t" style="top:284.00px;font-size:9.5px;line-height:12px;color:#666;right:119.00px;transform-origin:100% 50%;transform:scaleX(0.9709);">09:51:04</span>
<div style="position:absolute;left:955.60px;top:270.00px;width:45.00px;height:23.00px;background:#fff;border:1px solid #e6e9ea;border-radius:2.500px"></div>
<svg style="position:absolute;left:961.80px;top:276.40px" width="10.00" height="10.00" viewBox="64 128 1664 1664" preserveAspectRatio="xMidYMid meet" fill="#3c3c3c"><path d="M1088 800v64q0 13-9.500 22.500t-22.500 9.500h-224v224q0 13-9.500 22.500t-22.500 9.500h-64q-13 0-22.500-9.500t-9.500-22.500v-224h-224q-13 0-22.500-9.500t-9.500-22.500v-64q0-13 9.500-22.500t22.500-9.500h224v-224q0-13 9.500-22.500t22.500-9.500h64q13 0 22.500 9.500t9.500 22.500v224h224q13 0 22.500 9.500t9.500 22.500zm128 32q0-185-131.500-316.500t-316.500-131.500-316.500 131.500-131.500 316.500 131.500 316.500 316.500 131.500 316.500-131.500 131.500-316.500zm512 832q0 53-37.500 90.500t-90.500 37.500q-54 0-90-38l-343-342q-179 124-399 124-143 0-273.500-55.500t-225-150-150-225-55.500-273.500 55.500-273.500 150-225 225-150 273.500-55.500 273.500 55.500 225 150 150 225 55.500 273.500q0 220-124 399l343 343q37 37 37 90z"/></svg>
<span class="t" style="top:277.00px;font-size:9.5px;line-height:12px;color:#3c3c3c;left:974.00px;transform-origin:0 50%;transform:scaleX(0.9696);">View</span>
<div style="position:absolute;left:186.20px;top:298.00px;width:819.20px;height:31.00px;background:#fcfdfe;border-bottom:1px solid #eaedef"></div>
<div style="position:absolute;left:199.80px;top:306.00px;width:10.00px;height:10.00px;background:#fff;border:1px solid #666;border-radius:.5px"></div>
<span class="t" style="top:309.00px;font-size:9.5px;line-height:12px;color:#666;left:239.36px;transform-origin:50% 50%;transform:scaleX(0.9804);">4</span>
<span class="t" style="top:309.00px;font-size:9.5px;line-height:12px;color:#666;left:267.20px;transform-origin:0 50%;transform:scaleX(0.9201);">FFATNOMMJ</span>
<span class="t" style="top:309.00px;font-size:9.5px;line-height:12px;color:#666;left:366.83px;transform-origin:50% 50%;transform:scaleX(1.0130);">No</span>
<span class="t" style="top:302.00px;font-size:9.5px;line-height:12px;color:#666;left:414.80px;transform-origin:0 50%;transform:scaleX(1.0299);">United</span>
<span class="t" style="top:315.00px;font-size:9.5px;line-height:12px;color:#666;left:414.80px;transform-origin:0 50%;transform:scaleX(0.9584);">States</span>
<span class="t" style="top:309.00px;font-size:9.5px;line-height:12px;color:#666;left:479.20px;transform-origin:0 50%;transform:scaleX(0.8455);">J. DOE</span>
<span class="t" style="top:309.00px;font-size:9.5px;line-height:12px;color:#666;right:426.00px;transform-origin:100% 50%;transform:scaleX(0.9744);">$14.90</span>
<span class="t" style="top:302.00px;font-size:9.5px;line-height:12px;color:#666;left:609.20px;transform-origin:0 50%;transform:scaleX(0.9927);">Payment by</span>
<span class="t" style="top:315.00px;font-size:9.5px;line-height:12px;color:#666;left:609.20px;transform-origin:0 50%;transform:scaleX(0.9681);">check</span>
<div style="position:absolute;left:679.80px;top:306.00px;width:109.18px;height:15.40px;background:#4169e1;border-radius:2.500px"></div>
<span class="t" style="top:309.00px;font-size:9.5px;line-height:12px;color:#fff;left:683.10px;transform-origin:0 50%;">Awaiting check payment</span>
<span class="t" style="top:302.00px;font-size:9.5px;line-height:12px;color:#666;right:119.00px;transform-origin:100% 50%;transform:scaleX(1.0268);">11/18/2019</span>
<span class="t" style="top:315.00px;font-size:9.5px;line-height:12px;color:#666;right:119.00px;transform-origin:100% 50%;transform:scaleX(0.9709);">09:51:04</span>
<div style="position:absolute;left:955.60px;top:302.00px;width:45.00px;height:23.00px;background:#fff;border:1px solid #e6e9ea;border-radius:2.500px"></div>
<svg style="position:absolute;left:961.80px;top:308.40px" width="10.00" height="10.00" viewBox="64 128 1664 1664" preserveAspectRatio="xMidYMid meet" fill="#3c3c3c"><path d="M1088 800v64q0 13-9.500 22.500t-22.500 9.500h-224v224q0 13-9.500 22.500t-22.500 9.500h-64q-13 0-22.500-9.500t-9.500-22.500v-224h-224q-13 0-22.500-9.500t-9.500-22.500v-64q0-13 9.500-22.500t22.500-9.500h224v-224q0-13 9.500-22.500t22.500-9.500h64q13 0 22.500 9.500t9.500 22.500v224h224q13 0 22.500 9.500t9.500 22.500zm128 32q0-185-131.500-316.500t-316.500-131.500-316.500 131.500-131.500 316.500 131.500 316.500 316.500 131.500 316.500-131.500 131.500-316.500zm512 832q0 53-37.500 90.500t-90.500 37.500q-54 0-90-38l-343-342q-179 124-399 124-143 0-273.500-55.500t-225-150-150-225-55.500-273.500 55.500-273.500 150-225 225-150 273.500-55.500 273.500 55.500 225 150 150 225 55.500 273.500q0 220-124 399l343 343q37 37 37 90z"/></svg>
<span class="t" style="top:309.00px;font-size:9.5px;line-height:12px;color:#3c3c3c;left:974.00px;transform-origin:0 50%;transform:scaleX(0.9696);">View</span>
<div style="position:absolute;left:186.20px;top:329.00px;width:819.20px;height:31.00px;background:#fff;border-bottom:1px solid #eaedef"></div>
<div style="position:absolute;left:199.80px;top:338.00px;width:10.00px;height:10.00px;background:#fff;border:1px solid #666;border-radius:.5px"></div>
<span class="t" style="top:340.00px;font-size:9.5px;line-height:12px;color:#666;left:239.36px;transform-origin:50% 50%;transform:scaleX(0.9804);">3</span>
<span class="t" style="top:340.00px;font-size:9.5px;line-height:12px;color:#666;left:267.20px;transform-origin:0 50%;transform:scaleX(0.8944);">UOYEVOLI</span>
<span class="t" style="top:340.00px;font-size:9.5px;line-height:12px;color:#666;left:366.83px;transform-origin:50% 50%;transform:scaleX(1.0130);">No</span>
<span class="t" style="top:333.00px;font-size:9.5px;line-height:12px;color:#666;left:414.80px;transform-origin:0 50%;transform:scaleX(1.0299);">United</span>
<span class="t" style="top:346.00px;font-size:9.5px;line-height:12px;color:#666;left:414.80px;transform-origin:0 50%;transform:scaleX(0.9584);">States</span>
<span class="t" style="top:340.00px;font-size:9.5px;line-height:12px;color:#666;left:479.20px;transform-origin:0 50%;transform:scaleX(0.8455);">J. DOE</span>
<span class="t" style="top:340.00px;font-size:9.5px;line-height:12px;color:#666;right:426.00px;transform-origin:100% 50%;transform:scaleX(0.9744);">$14.90</span>
<span class="t" style="top:333.00px;font-size:9.5px;line-height:12px;color:#666;left:609.20px;transform-origin:0 50%;transform:scaleX(0.9927);">Payment by</span>
<span class="t" style="top:346.00px;font-size:9.5px;line-height:12px;color:#666;left:609.20px;transform-origin:0 50%;transform:scaleX(0.9681);">check</span>
<div style="position:absolute;left:679.80px;top:337.00px;width:68.23px;height:15.40px;background:#8f0621;border-radius:2.500px"></div>
<span class="t" style="top:340.00px;font-size:9.5px;line-height:12px;color:#fff;left:683.10px;transform-origin:0 50%;transform:scaleX(1.0190);">Payment error</span>
<span class="t" style="top:333.00px;font-size:9.5px;line-height:12px;color:#666;right:119.00px;transform-origin:100% 50%;transform:scaleX(1.0268);">11/18/2019</span>
<span class="t" style="top:346.00px;font-size:9.5px;line-height:12px;color:#666;right:119.00px;transform-origin:100% 50%;transform:scaleX(0.9709);">09:51:04</span>
<div style="position:absolute;left:955.60px;top:333.00px;width:45.00px;height:23.00px;background:#fff;border:1px solid #e6e9ea;border-radius:2.500px"></div>
<svg style="position:absolute;left:961.80px;top:339.40px" width="10.00" height="10.00" viewBox="64 128 1664 1664" preserveAspectRatio="xMidYMid meet" fill="#3c3c3c"><path d="M1088 800v64q0 13-9.500 22.500t-22.500 9.500h-224v224q0 13-9.500 22.500t-22.500 9.500h-64q-13 0-22.500-9.500t-9.500-22.500v-224h-224q-13 0-22.500-9.500t-9.500-22.500v-64q0-13 9.500-22.500t22.500-9.500h224v-224q0-13 9.500-22.500t22.500-9.500h64q13 0 22.500 9.500t9.500 22.500v224h224q13 0 22.500 9.500t9.500 22.500zm128 32q0-185-131.500-316.500t-316.500-131.500-316.500 131.500-131.500 316.500 131.500 316.500 316.500 131.500 316.500-131.500 131.500-316.500zm512 832q0 53-37.500 90.500t-90.500 37.500q-54 0-90-38l-343-342q-179 124-399 124-143 0-273.500-55.500t-225-150-150-225-55.500-273.500 55.500-273.500 150-225 225-150 273.500-55.500 273.500 55.500 225 150 150 225 55.500 273.500q0 220-124 399l343 343q37 37 37 90z"/></svg>
<span class="t" style="top:340.00px;font-size:9.5px;line-height:12px;color:#3c3c3c;left:974.00px;transform-origin:0 50%;transform:scaleX(0.9696);">View</span>
<div style="position:absolute;left:186.20px;top:360.00px;width:819.20px;height:32.00px;background:#fcfdfe;border-bottom:1px solid #eaedef"></div>
<div style="position:absolute;left:199.80px;top:369.00px;width:10.00px;height:10.00px;background:#fff;border:1px solid #666;border-radius:.5px"></div>
<span class="t" style="top:371.00px;font-size:9.5px;line-height:12px;color:#666;left:239.36px;transform-origin:50% 50%;transform:scaleX(0.9804);">2</span>
<span class="t" style="top:371.00px;font-size:9.5px;line-height:12px;color:#666;left:267.20px;transform-origin:0 50%;transform:scaleX(0.8727);">OHSATSERP</span>
<span class="t" style="top:371.00px;font-size:9.5px;line-height:12px;color:#666;left:366.83px;transform-origin:50% 50%;transform:scaleX(1.0130);">No</span>
<span class="t" style="top:364.00px;font-size:9.5px;line-height:12px;color:#666;left:414.80px;transform-origin:0 50%;transform:scaleX(1.0299);">United</span>
<span class="t" style="top:378.00px;font-size:9.5px;line-height:12px;color:#666;left:414.80px;transform-origin:0 50%;transform:scaleX(0.9584);">States</span>
<span class="t" style="top:371.00px;font-size:9.5px;line-height:12px;color:#666;left:479.20px;transform-origin:0 50%;transform:scaleX(0.8455);">J. DOE</span>
<span class="t" style="top:371.00px;font-size:9.5px;line-height:12px;color:#666;right:426.00px;transform-origin:100% 50%;transform:scaleX(0.9744);">$69.90</span>
<span class="t" style="top:364.00px;font-size:9.5px;line-height:12px;color:#666;left:609.20px;transform-origin:0 50%;transform:scaleX(0.9927);">Payment by</span>
<span class="t" style="top:378.00px;font-size:9.5px;line-height:12px;color:#666;left:609.20px;transform-origin:0 50%;transform:scaleX(0.9681);">check</span>
<div style="position:absolute;left:679.80px;top:368.00px;width:109.18px;height:15.40px;background:#4169e1;border-radius:2.500px"></div>
<span class="t" style="top:371.00px;font-size:9.5px;line-height:12px;color:#fff;left:683.10px;transform-origin:0 50%;">Awaiting check payment</span>
<span class="t" style="top:364.00px;font-size:9.5px;line-height:12px;color:#666;right:119.00px;transform-origin:100% 50%;transform:scaleX(1.0268);">11/18/2019</span>
<span class="t" style="top:378.00px;font-size:9.5px;line-height:12px;color:#666;right:119.00px;transform-origin:100% 50%;transform:scaleX(0.9709);">09:51:04</span>
<div style="position:absolute;left:955.60px;top:364.00px;width:45.00px;height:23.00px;background:#fff;border:1px solid #e6e9ea;border-radius:2.500px"></div>
<svg style="position:absolute;left:961.80px;top:370.40px" width="10.00" height="10.00" viewBox="64 128 1664 1664" preserveAspectRatio="xMidYMid meet" fill="#3c3c3c"><path d="M1088 800v64q0 13-9.500 22.500t-22.500 9.500h-224v224q0 13-9.500 22.500t-22.500 9.500h-64q-13 0-22.500-9.500t-9.500-22.500v-224h-224q-13 0-22.500-9.500t-9.500-22.500v-64q0-13 9.500-22.500t22.500-9.500h224v-224q0-13 9.500-22.500t22.500-9.500h64q13 0 22.500 9.500t9.500 22.500v224h224q13 0 22.500 9.500t9.500 22.500zm128 32q0-185-131.500-316.500t-316.500-131.500-316.500 131.500-131.500 316.500 131.500 316.500 316.500 131.500 316.500-131.500 131.500-316.500zm512 832q0 53-37.500 90.500t-90.500 37.500q-54 0-90-38l-343-342q-179 124-399 124-143 0-273.500-55.500t-225-150-150-225-55.500-273.500 55.500-273.500 150-225 225-150 273.500-55.500 273.500 55.500 225 150 150 225 55.500 273.500q0 220-124 399l343 343q37 37 37 90z"/></svg>
<span class="t" style="top:371.00px;font-size:9.5px;line-height:12px;color:#3c3c3c;left:974.00px;transform-origin:0 50%;transform:scaleX(0.9696);">View</span>
<div style="position:absolute;left:186.20px;top:392.00px;width:819.20px;height:31.00px;background:#fff;border-bottom:1px solid #eaedef"></div>
<div style="position:absolute;left:199.80px;top:400.00px;width:10.00px;height:10.00px;background:#fff;border:1px solid #666;border-radius:.5px"></div>
<span class="t" style="top:402.00px;font-size:9.5px;line-height:12px;color:#666;left:239.36px;transform-origin:50% 50%;transform:scaleX(0.9804);">1</span>
<span class="t" style="top:402.00px;font-size:9.5px;line-height:12px;color:#666;left:267.20px;transform-origin:0 50%;transform:scaleX(0.8690);">XKBKNABJK</span>
<span class="t" style="top:402.00px;font-size:9.5px;line-height:12px;color:#666;left:365.15px;transform-origin:50% 50%;transform:scaleX(0.9342);">Yes</span>
<span class="t" style="top:396.00px;font-size:9.5px;line-height:12px;color:#666;left:414.80px;transform-origin:0 50%;transform:scaleX(1.0299);">United</span>
<span class="t" style="top:409.00px;font-size:9.5px;line-height:12px;color:#666;left:414.80px;transform-origin:0 50%;transform:scaleX(0.9584);">States</span>
<span class="t" style="top:402.00px;font-size:9.5px;line-height:12px;color:#666;left:479.20px;transform-origin:0 50%;transform:scaleX(0.8455);">J. DOE</span>
<span class="t" style="top:402.00px;font-size:9.5px;line-height:12px;color:#666;right:426.00px;transform-origin:100% 50%;transform:scaleX(0.9744);">$61.80</span>
<span class="t" style="top:396.00px;font-size:9.5px;line-height:12px;color:#666;left:609.20px;transform-origin:0 50%;transform:scaleX(0.9927);">Payment by</span>
<span class="t" style="top:409.00px;font-size:9.5px;line-height:12px;color:#666;left:609.20px;transform-origin:0 50%;transform:scaleX(0.9681);">check</span>
<div style="position:absolute;left:679.80px;top:399.00px;width:45.54px;height:15.40px;background:#dc143c;border-radius:2.500px"></div>
<span class="t" style="top:402.00px;font-size:9.5px;line-height:12px;color:#fff;left:683.10px;transform-origin:0 50%;transform:scaleX(0.9626);">Canceled</span>
<span class="t" style="top:396.00px;font-size:9.5px;line-height:12px;color:#666;right:119.00px;transform-origin:100% 50%;transform:scaleX(1.0268);">11/18/2019</span>
<span class="t" style="top:409.00px;font-size:9.5px;line-height:12px;color:#666;right:119.00px;transform-origin:100% 50%;transform:scaleX(0.9709);">09:51:04</span>
<div style="position:absolute;left:955.60px;top:395.00px;width:45.00px;height:23.00px;background:#fff;border:1px solid #e6e9ea;border-radius:2.500px"></div>
<svg style="position:absolute;left:961.80px;top:401.40px" width="10.00" height="10.00" viewBox="64 128 1664 1664" preserveAspectRatio="xMidYMid meet" fill="#3c3c3c"><path d="M1088 800v64q0 13-9.500 22.500t-22.500 9.500h-224v224q0 13-9.500 22.500t-22.500 9.500h-64q-13 0-22.500-9.500t-9.500-22.500v-224h-224q-13 0-22.500-9.500t-9.500-22.500v-64q0-13 9.500-22.500t22.500-9.500h224v-224q0-13 9.500-22.500t22.500-9.500h64q13 0 22.500 9.500t9.500 22.500v224h224q13 0 22.500 9.500t9.500 22.500zm128 32q0-185-131.500-316.500t-316.500-131.500-316.500 131.500-131.500 316.500 131.500 316.500 316.500 131.500 316.500-131.500 131.500-316.500zm512 832q0 53-37.500 90.500t-90.500 37.500q-54 0-90-38l-343-342q-179 124-399 124-143 0-273.500-55.500t-225-150-150-225-55.500-273.500 55.500-273.500 150-225 225-150 273.500-55.500 273.500 55.500 225 150 150 225 55.500 273.500q0 220-124 399l343 343q37 37 37 90z"/></svg>
<span class="t" style="top:402.00px;font-size:9.5px;line-height:12px;color:#3c3c3c;left:974.00px;transform-origin:0 50%;transform:scaleX(0.9696);">View</span>
<div style="position:absolute;left:186.40px;top:439.00px;width:73.20px;height:24.00px;background:#fff;border:1px solid #e6e9ea;border-radius:2.500px"></div>
<span class="t" style="top:446.00px;font-size:9.2px;line-height:12px;color:#555;left:193.30px;transform-origin:0 50%;transform:scaleX(1.0287);">Bulk actions</span>
<svg style="position:absolute;left:247.00px;top:449.60px;" width="5.80" height="3.40" viewBox="0 0 6.200 3.600" fill="#333"><path d="M0 3.600h6.200L3.100 0z"/></svg>
</main>
</div>
</body>
</html>
